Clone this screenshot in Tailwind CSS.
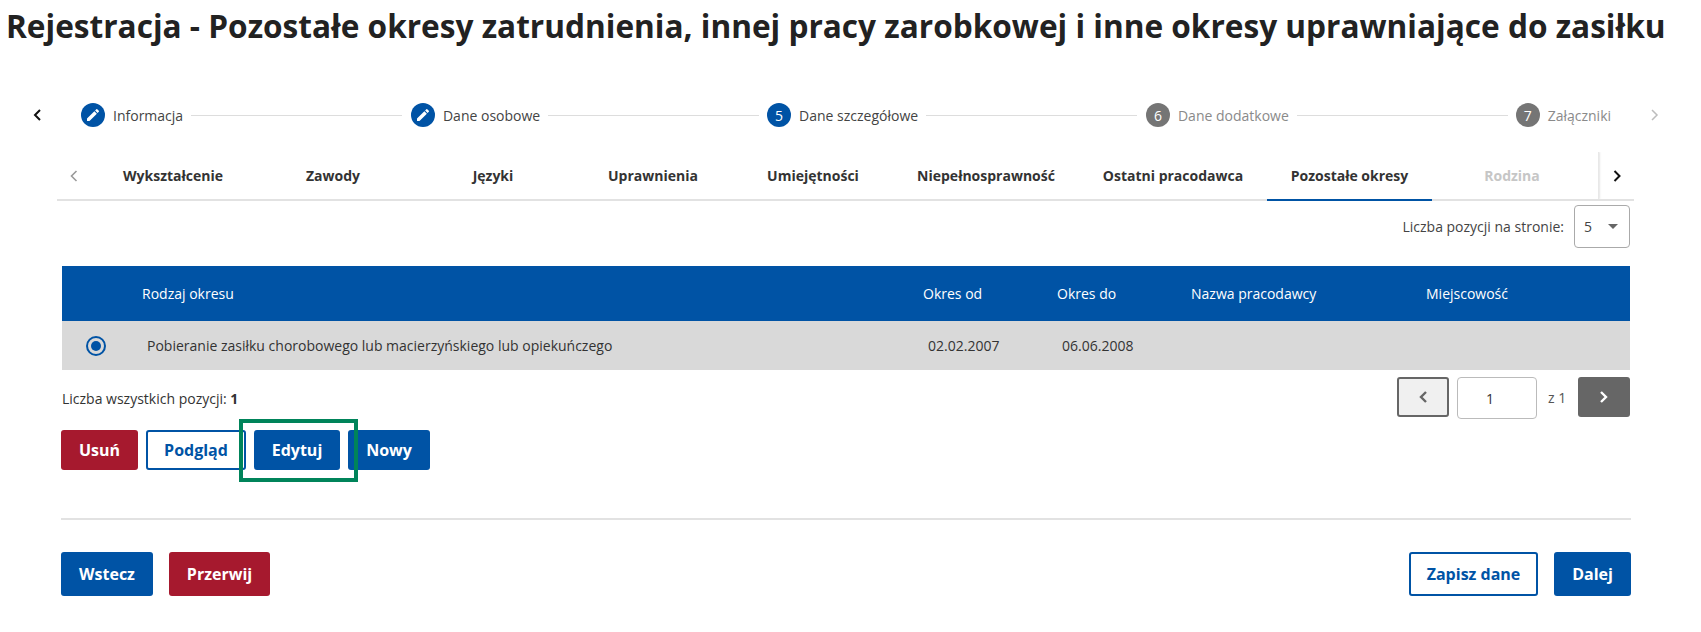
<!DOCTYPE html>
<html lang="pl"><head><meta charset="utf-8"><title>Rejestracja</title>
<script src="https://cdn.jsdelivr.net/npm/@tailwindcss/browser@4"></script></head>
<body class="bg-white font-['Open_Sans',sans-serif] text-[#333] overflow-hidden">
<div class="w-[1701px] h-[632px]">
<h1 class="pl-[6px] pt-[4px] h-[103px] text-[31.6px] leading-[43px] font-bold text-[#222] whitespace-nowrap">Rejestracja - Pozostałe okresy zatrudnienia, innej pracy zarobkowej i inne okresy uprawniające do zasiłku</h1>
<nav class="flex items-center h-[24px] text-[14px] whitespace-nowrap">
  <svg class="ml-[32px] w-[10px] h-[14px]" viewBox="0 0 10 14" fill="none" stroke="#111" stroke-width="2"><path d="M8 2 3 7l5 5"/></svg>
  <div class="ml-[39px] w-[1530px] flex items-center">
    <span class="w-[24px] h-[24px] rounded-full bg-[#0053a5] flex items-center justify-center shrink-0"><svg class="w-[16px] h-[16px]" viewBox="0 0 24 24" fill="#fff"><path d="M3 17.25V21h3.75L17.81 9.94l-3.75-3.75L3 17.25zM20.71 7.04a1 1 0 0 0 0-1.41l-2.34-2.34a1 1 0 0 0-1.41 0l-1.83 1.83 3.75 3.75 1.83-1.83z"/></svg></span>
    <span class="ml-[8px] text-[#444]">Informacja</span><span class="flex-1 h-px bg-[#ddd] ml-[8px] mr-[9px]"></span>
    <span class="w-[24px] h-[24px] rounded-full bg-[#0053a5] flex items-center justify-center shrink-0"><svg class="w-[16px] h-[16px]" viewBox="0 0 24 24" fill="#fff"><path d="M3 17.25V21h3.75L17.81 9.94l-3.75-3.75L3 17.25zM20.71 7.04a1 1 0 0 0 0-1.41l-2.34-2.34a1 1 0 0 0-1.41 0l-1.83 1.83 3.75 3.75 1.83-1.83z"/></svg></span>
    <span class="ml-[8px] text-[#444]">Dane osobowe</span><span class="flex-1 h-px bg-[#ddd] mx-[8px]"></span>
    <span class="w-[24px] h-[24px] rounded-full bg-[#0053a5] text-white flex items-center justify-center shrink-0">5</span>
    <span class="ml-[8px] text-[#444]">Dane szczegółowe</span><span class="flex-1 h-px bg-[#ddd] ml-[8px] mr-[9px]"></span>
    <span class="w-[24px] h-[24px] rounded-full bg-[#757575] text-white flex items-center justify-center shrink-0">6</span>
    <span class="ml-[8px] text-[#8a8a8a]">Dane dodatkowe</span><span class="flex-1 h-px bg-[#ddd] mx-[8px]"></span>
    <span class="w-[24px] h-[24px] rounded-full bg-[#757575] text-white flex items-center justify-center shrink-0">7</span>
    <span class="ml-[8px] text-[#8a8a8a]">Załączniki</span>
  </div>
  <svg class="ml-[39px] w-[10px] h-[14px]" viewBox="0 0 10 14" fill="none" stroke="#bdbdbd" stroke-width="1.5"><path d="M2 2l5 5-5 5"/></svg>
</nav>
<div class="mt-[25px] ml-[57px] w-[1577px] h-[49px] flex border-b-2 border-[#e2e2e2] text-[14px] font-bold text-[#333] whitespace-nowrap">
  <div class="w-[36px] flex items-center justify-center"><svg class="ml-[-3px] w-[10px] h-[14px]" viewBox="0 0 10 14" fill="none" stroke="#9a9a9a" stroke-width="1.6"><path d="M7.5 2 2.5 7l5 5"/></svg></div>
  <div class="w-[160px] flex items-center justify-center">Wykształcenie</div>
  <div class="w-[160px] flex items-center justify-center">Zawody</div>
  <div class="w-[160px] flex items-center justify-center">Języki</div>
  <div class="w-[160px] flex items-center justify-center">Uprawnienia</div>
  <div class="w-[160px] flex items-center justify-center">Umiejętności</div>
  <div class="w-[186px] flex items-center justify-center">Niepełnosprawność</div>
  <div class="w-[188px] flex items-center justify-center">Ostatni pracodawca</div>
  <div class="w-[165px] flex items-center justify-center border-b-2 border-[#0053a5] mb-[-2px]">Pozostałe okresy</div>
  <div class="w-[160px] flex items-center justify-center text-[#c6c6c6]">Rodzina</div>
  <div class="w-[7px] border-r border-[#e8e8e8] shadow-[1px_0_2px_rgba(0,0,0,0.1)] [clip-path:inset(0_-4px_0_0)]"></div>
  <div class="flex-1 flex items-center justify-center"><svg class="w-[10px] h-[14px]" viewBox="0 0 10 14" fill="none" stroke="#111" stroke-width="2"><path d="M2.5 2l5 5-5 5"/></svg></div>
</div>
<div class="mt-[4px] w-[1630px] flex justify-end items-center text-[14px] text-[#444]">
  <span class="mr-[10px]">Liczba pozycji na stronie:</span>
  <div class="w-[56px] h-[43px] border border-[#aaa] rounded-[4px] flex items-center justify-between pl-[9px] pr-[11px] text-[14px]"><span>5</span><span class="w-0 h-0 border-x-[5px] border-x-transparent border-t-[5px] border-t-[#666]"></span></div>
</div>
<div class="mt-[18px] ml-[62px] w-[1568px] text-[14px]">
  <div class="h-[55px] bg-[#0053a5] text-white grid grid-cols-[80px_781px_134px_134px_235px_1fr] items-center">
    <span></span><span>Rodzaj okresu</span><span>Okres od</span><span>Okres do</span><span>Nazwa pracodawcy</span><span>Miejscowość</span>
  </div>
  <div class="h-[49px] bg-[#d9d9d9] grid grid-cols-[80px_781px_134px_134px_235px_1fr] items-center">
    <span class="ml-[24px] w-[20px] h-[20px] rounded-full border-2 border-[#0053a5] flex items-center justify-center"><span class="w-[10px] h-[10px] rounded-full bg-[#0053a5]"></span></span>
    <span class="pl-[5px]">Pobieranie zasiłku chorobowego lub macierzyńskiego lub opiekuńczego</span><span class="pl-[5px]">02.02.2007</span><span class="pl-[5px]">06.06.2008</span><span></span><span></span>
  </div>
</div>
<div class="mt-[7px] ml-[62px] w-[1568px] h-[42px] flex items-center text-[14px]">
  <span class="flex-1">Liczba wszystkich pozycji: <b>1</b></span>
  <div class="flex items-start h-[42px]">
    <span class="w-[52px] h-[40px] rounded-[3px] border-2 border-[#666] bg-[#f0f0f0] flex items-center justify-center"><svg class="w-[10px] h-[14px]" viewBox="0 0 10 14" fill="none" stroke="#666" stroke-width="2.4"><path d="M8 2 3 7l5 5"/></svg></span>
    <span class="ml-[8px] w-[80px] h-[42px] rounded-[4px] border border-[#bbb] flex items-center pl-[28px] text-[14px]">1</span>
    <span class="ml-[11px] w-[30px] h-[40px] flex items-center text-[#555] text-[14px]">z 1</span>
    <span class="w-[52px] h-[40px] rounded-[3px] bg-[#666] flex items-center justify-center"><svg class="w-[10px] h-[14px]" viewBox="0 0 10 14" fill="none" stroke="#fff" stroke-width="2.4"><path d="M2 2l5 5-5 5"/></svg></span>
  </div>
</div>
<div class="relative mt-[11px] ml-[61px] flex h-[40px] text-[16px] font-bold whitespace-nowrap">
  <span class="w-[77px] rounded-[3px] bg-[#a6192e] text-white flex items-center justify-center">Usuń</span>
  <span class="ml-[8px] w-[100px] rounded-[3px] border-2 border-[#0053a5] text-[#0053a5] flex items-center justify-center">Podgląd</span>
  <span class="ml-[8px] w-[86px] rounded-[3px] bg-[#0053a5] text-white flex items-center justify-center">Edytuj</span>
  <span class="ml-[8px] w-[82px] rounded-[3px] bg-[#0053a5] text-white flex items-center justify-center">Nowy</span>
  <span class="absolute left-[178px] top-[-11px] w-[119px] h-[63px] border-[4px] border-[#00845a]"></span>
</div>
<div class="mt-[48px] ml-[61px] w-[1570px] h-[2px] bg-[#e2e2e2]"></div>
<div class="mt-[32px] ml-[61px] w-[1570px] h-[44px] flex text-[16px] font-bold whitespace-nowrap">
  <span class="w-[92px] rounded-[3px] bg-[#0053a5] text-white flex items-center justify-center">Wstecz</span>
  <span class="ml-[16px] w-[101px] rounded-[3px] bg-[#a6192e] text-white flex items-center justify-center">Przerwij</span>
  <span class="ml-auto w-[129px] rounded-[3px] border-2 border-[#0053a5] text-[#0053a5] flex items-center justify-center">Zapisz dane</span>
  <span class="ml-[16px] w-[77px] rounded-[3px] bg-[#0053a5] text-white flex items-center justify-center">Dalej</span>
</div>
</div>
</body></html>
